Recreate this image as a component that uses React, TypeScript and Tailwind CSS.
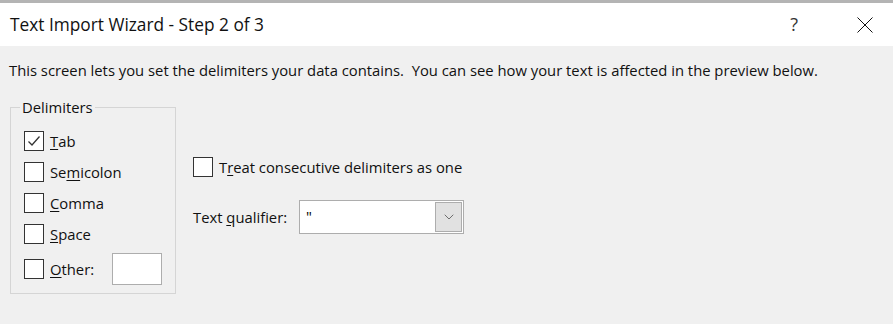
import { ChevronDown } from "lucide-react"

const font = { fontFamily: '"Open Sans", "Noto Sans", sans-serif' }

function Box({ checked }: { checked?: boolean }) {
  return (
    <div className="w-[20px] h-[20px] border border-[#333] bg-white flex items-center justify-center shrink-0">
      {checked && (
        <svg width="16" height="16" viewBox="0 0 16 16">
          <path d="M2.5 8.5 L6 12 L13.5 3.5" fill="none" stroke="#333" strokeWidth="1.3" />
        </svg>
      )}
    </div>
  )
}

function Opt({ checked, pre, key_, post }: { checked?: boolean; pre: string; key_: string; post: string }) {
  return (
    <div className="flex items-center h-[20px] gap-[6px]">
      <Box checked={checked} />
      <span className="text-[14.8px] text-[#111]">
        {pre}
        <span className="underline underline-offset-2">{key_}</span>
        {post}
      </span>
    </div>
  )
}

export default function App() {
  return (
    <div className="w-[893px] h-[324px] bg-[#f0f0f0] flex flex-col" style={font}>
      <div className="h-[3px] bg-[#b4b4b4]" />
      <div className="h-[43px] bg-white flex items-center pl-[10px] pr-[20px]">
        <span className="text-[17.3px] text-[#111] flex-1">Text Import Wizard - Step 2 of 3</span>
        <span className="text-[18px] text-[#333] mr-[59px]">?</span>
        <svg width="16" height="16" viewBox="0 0 16 16">
          <path d="M0.5 0.5 L15.5 15.5 M15.5 0.5 L0.5 15.5" stroke="#111" strokeWidth="1" />
        </svg>
      </div>
      <p className="text-[14.8px] text-[#111] pl-[9px] mt-[13px] whitespace-pre">
        This screen lets you set the delimiters your data contains.  You can see how your text is affected in the preview below.
      </p>
      <div className="flex mt-[15px] pl-[10px]">
        <fieldset className="w-[166px] h-[198px] border border-[#d5d5d5] pl-[13px] m-0 pt-0">
          <legend className="text-[14.8px] text-[#111] px-[2px] ml-[-4px]">Delimiters</legend>
          <div className="flex flex-col gap-[11px] mt-[13px]">
            <Opt checked pre="" key_="T" post="ab" />
            <Opt pre="Se" key_="m" post="icolon" />
            <Opt pre="" key_="C" post="omma" />
            <Opt pre="" key_="S" post="pace" />
          </div>
          <div className="flex items-center h-[32px] mt-[9px]">
            <Opt pre="" key_="O" post="ther:" />
            <div className="ml-[18px] w-[50px] h-[32px] bg-white border border-[#adadad]" />
          </div>
        </fieldset>
        <div className="flex flex-col pl-[17px] pt-[61px]">
          <Opt pre="T" key_="r" post="eat consecutive delimiters as one" />
          <div className="flex items-center mt-[23px]">
            <span className="text-[14.8px] text-[#111] w-[106px]">
              Text <span className="underline underline-offset-2">q</span>ualifier:
            </span>
            <div className="w-[165px] h-[34px] bg-white border border-[#adadad] flex items-stretch p-[1px]">
              <span className="flex-1 text-[14.8px] pl-[5px] leading-[28px]">"</span>
              <div className="w-[27px] bg-[#e1e1e1] border border-[#adadad] flex items-center justify-center">
                <ChevronDown size={16} strokeWidth={1} color="#333" />
              </div>
            </div>
          </div>
        </div>
      </div>
    </div>
  )
}
